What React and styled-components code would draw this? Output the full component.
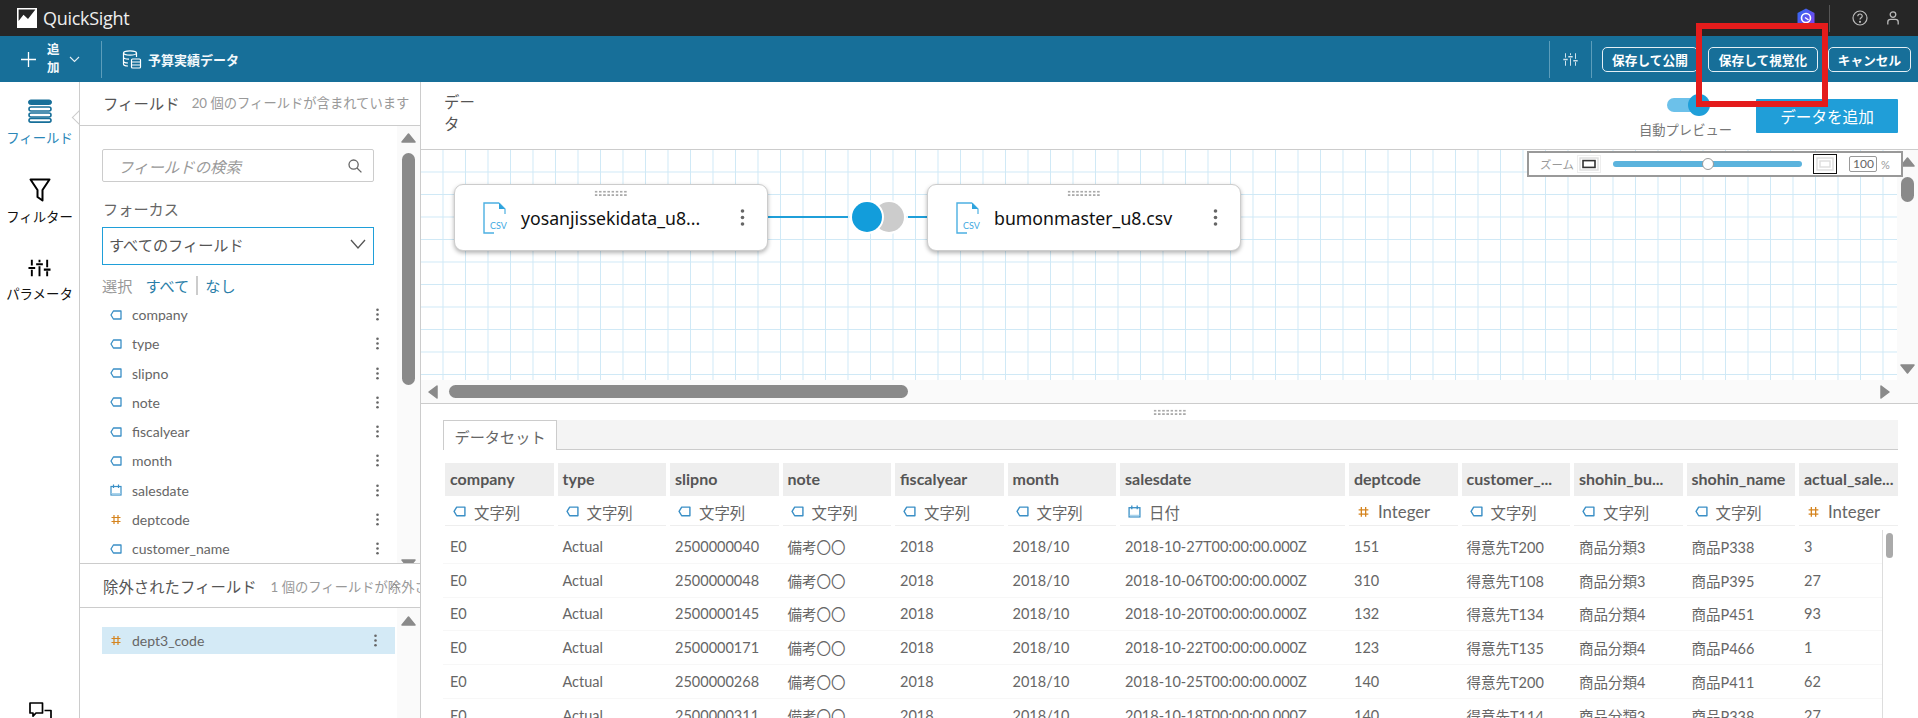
import React from "react";
import styled, { createGlobalStyle } from "styled-components";

const FONT = `Lato, "Noto Sans CJK JP", sans-serif`;

const Global = createGlobalStyle`
  html, body { margin: 0; padding: 0; background: #fff; }
  body { font-family: ${FONT}; }
  * { box-sizing: border-box; }
`;

const Root = styled.div`
  position: relative; width: 1918px; height: 718px; overflow: hidden;
  display: flex; flex-direction: column; background: #fff; color: #666;
`;
const RedFrame = styled.div`
  position: absolute; left: 1696px; top: 23px; width: 132px; height: 84px;
  border: 6px solid #e41c1c; pointer-events: none;
`;

/* top bar */
const TopBar = styled.header`
  height: 36px; flex: none; background: #262626; display: flex; align-items: center; padding-left: 17px;
`;
const LogoText = styled.span`
  margin-left: 6px; font: 400 18px "Open Sans", sans-serif; letter-spacing: -0.3px; color: #eee;
`;
const TopRight = styled.div`
  margin-left: auto; display: flex; align-items: center; height: 100%; padding-right: 19px;
`;
const TopDivider = styled.span`
  width: 1px; height: 27px; background: #555; margin: 0 22px 0 13px;
`;
const HelpWrap = styled.span`
  display: flex; margin-right: 19px; color: #bbb;
`;

/* tool bar */
const ToolBar = styled.div`
  height: 46px; flex: none; background: #176f99; display: flex; align-items: center; color: #fff;
`;
const AddGroup = styled.div`
  display: flex; align-items: center; padding-left: 21px; width: 101px;
`;
const AddLabel = styled.span`
  font-size: 12.5px; font-weight: 700; line-height: 18px; width: 13px; margin: 0 9px 0 11px; color: #f2f8fb;
`;
const BarDivider = styled.span`
  width: 1px; height: 37px; background: #5c9dbb; flex: none;
  margin-left: ${(p) => p.$ml || 0}px; margin-right: ${(p) => p.$mr || 0}px;
`;
const DataName = styled.span`
  font-size: 13px; font-weight: 700; margin-left: 6px; color: #f2f8fb;
`;
const ToolRight = styled.div`
  margin-left: auto; display: flex; align-items: center; padding-right: 7px;
`;
const OutlineButton = styled.button`
  width: ${(p) => p.$w}px; height: 25px; margin-right: ${(p) => p.$mr || 0}px; padding: 0;
  background: transparent; border: 1px solid #e4eff5; border-radius: 5px; color: #fff;
  font: 700 12.6px ${FONT}; letter-spacing: 0.1px; white-space: nowrap;
`;

/* main */
const Main = styled.div`
  flex: 1; min-height: 0; display: flex;
`;
const Rail = styled.nav`
  width: 80px; flex: none; border-right: 1px solid #ccc; display: flex; flex-direction: column;
  align-items: center; position: relative; overflow: hidden; padding-top: 17px;
`;
const RailNotch = styled.span`
  position: absolute; right: -6px; top: 30px; width: 11px; height: 11px; background: #fff;
  border-left: 1px solid #ccc; border-bottom: 1px solid #ccc; transform: rotate(45deg);
`;
const RailItem = styled.div`
  height: ${(p) => p.$h}px; display: flex; flex-direction: column; align-items: center; flex: none;
`;
const RailIcon = styled.span`
  height: 24px; display: flex; align-items: flex-start;
`;
const RailLabel = styled.span`
  margin-top: ${(p) => p.$mt}px; font-size: 13.4px; line-height: 18px; white-space: nowrap;
  color: ${(p) => (p.$active ? "#2b87b8" : "#111")};
`;
const RailBottom = styled.div`
  margin-top: auto; margin-bottom: -8px; display: flex;
`;

/* field panel */
const FieldPanel = styled.aside`
  width: 341px; flex: none; border-right: 1px solid #ccc; display: flex; flex-direction: column;
`;
const PanelHead = styled.div`
  height: ${(p) => p.$h}px; flex: none; display: flex; align-items: center; padding-left: 23px;
  padding-bottom: ${(p) => p.$pb || 0}px; padding-top: ${(p) => p.$pt || 0}px;
  border-bottom: 1px solid #ccc; white-space: nowrap; overflow: hidden; position: relative;
`;
const PanelTitle = styled.span`
  font-size: 15.4px; color: #555;
`;
const PanelSub = styled.span`
  font-size: 13.3px; color: #999; margin-left: ${(p) => p.$ml}px;
`;
const CollapseMark = styled.span`
  position: absolute; left: 309px; top: 19px; display: flex;
`;
const PanelBody = styled.div`
  display: flex; flex: ${(p) => (p.$grow ? 1 : "none")}; height: ${(p) => (p.$h ? p.$h + "px" : "auto")};
  min-height: 0; overflow: hidden;
  border-bottom: ${(p) => (p.$line ? "1px solid #ccc" : "none")};
`;
const PanelContent = styled.div`
  flex: 1; min-width: 0; padding-left: 22px;
`;
const SearchBox = styled.div`
  margin: 23px 23px 0 0; height: 33px; border: 1px solid #ccc; border-radius: 2px; display: flex;
  align-items: center; padding: 0 11px 0 15px;
`;
const Placeholder = styled.span`
  flex: 1; font-size: 15.4px; font-style: italic; color: #999;
`;
const FormLabel = styled.div`
  margin-top: 16px; font-size: 15.2px; line-height: 22px; color: #666; padding-left: 1px;
`;
const SelectBox = styled.div`
  margin: 7px 23px 0 0; height: 38px; border: 1px solid #1f9fd9; display: flex; align-items: center;
  padding: 0 7px 4px 6px; justify-content: space-between; font-size: 15.2px; color: #555;
`;
const SelectRow = styled.div`
  display: flex; align-items: center; height: 20px; margin-top: 10px; font-size: 15.2px; color: #999;
`;
const LinkText = styled.span`
  color: #2a7ea8;
  margin-left: ${(p) => p.$ml || 0}px;
`;
const Bar = styled.span`
  width: 2px; height: 19px; background: #ccc; margin: 0 7px;
`;
const FieldList = styled.div`
  margin-top: 5px;
`;
const FieldRow = styled.div`
  height: ${(p) => (p.$sel ? 27 : 29.25)}px; display: flex; align-items: center; padding: 0 18px 0 8px;
  font-size: 14px; color: #666; gap: 10px; margin-right: ${(p) => (p.$sel ? 2 : 0)}px;
  background: ${(p) => (p.$sel ? "#d4eaf6" : "transparent")};
`;
const FieldName = styled.span`
  flex: 1;
`;
const ExcludedList = styled.div`
  margin-top: 19px;
`;
const Track = styled.div`
  width: ${(p) => p.$w || 23}px; flex: none; background: #fafafa; display: flex; flex-direction: column;
  align-items: center; overflow: hidden; padding-top: ${(p) => p.$pt || 0}px;
`;
const VThumb = styled.div`
  width: 13px; border-radius: 7px; background: #8a8a8a; flex: none;
  height: ${(p) => p.$h}px; margin-top: ${(p) => p.$mt}px; margin-bottom: ${(p) => p.$mb || 0}px;
`;

/* workspace */
const Workspace = styled.section`
  flex: 1; min-width: 0; display: flex; flex-direction: column;
`;
const WorkHead = styled.div`
  height: 68px; flex: none; display: flex; border-bottom: 1px solid #ccc; padding: 10px 20px 0 23px;
`;
const WorkTitle = styled.div`
  width: 32px; font-size: 15.4px; line-height: 21.5px; color: #555;
`;
const PreviewBlock = styled.div`
  margin-left: auto; width: 93px; display: flex; flex-direction: column; align-items: center; margin-top: 6px;
`;
const Switch = styled.div`
  position: relative; width: 42px; height: 14px; border-radius: 7px; background: #6cc1ea; margin: 0 0 0 4px;
`;
const SwitchThumb = styled.span`
  position: absolute; right: -1px; top: -4px; width: 22px; height: 22px; border-radius: 50%; background: #1f9fd9;
`;
const PreviewLabel = styled.span`
  margin-top: 8px; font-size: 13.3px; color: #777; white-space: nowrap;
`;
const PrimaryButton = styled.button`
  margin: 7px 0 0 24px; width: 142px; height: 34px; border: 0; border-radius: 1px; background: #209ed8;
  color: #fff; font: 400 15.6px ${FONT}; padding: 0;
`;

const CanvasWrap = styled.div`
  height: 254px; flex: none; position: relative; border-bottom: 1px solid #ccc; display: flex; flex-direction: column;
`;
const CanvasRow = styled.div`
  height: 230px; flex: none; display: flex;
`;
const Grid = styled.div`
  flex: 1; min-width: 0; display: flex; align-items: flex-start; padding: 34px 0 0 33px;
  background-image:
    linear-gradient(to right, #cfe9f6 1px, transparent 1px),
    linear-gradient(to bottom, #cfe9f6 1px, transparent 1px);
  background-size: 22.5px 22.5px;
  background-position: 21.5px 21.5px;
`;
const Node = styled.div`
  width: 314px; height: 67px; flex: none; position: relative; background: #fff; border: 1px solid #ccc;
  border-radius: 9px; box-shadow: 0 2px 4px rgba(0, 0, 0, 0.3); display: flex; align-items: center;
  padding: 0 12px 0 28px;
`;
const Grip = styled.span`
  position: absolute; left: 139px; top: 5px; width: 34px; height: 7px;
  background-image: radial-gradient(circle, #aaa 1px, transparent 1.2px);
  background-size: 4.2px 3.4px;
`;
const NodeName = styled.span`
  flex: 1; margin-left: 14px; font: 400 17.7px "Noto Sans", sans-serif; color: #111; white-space: nowrap;
`;
const Connector = styled.div`
  width: 159px; height: 66px; flex: none; display: flex; align-items: center;
`;
const Line = styled.span`
  height: 2px; background: #1f9fd9; width: ${(p) => p.$w}px; flex: none;
`;
const ZoomBar = styled.div`
  position: absolute; left: 1106px; top: 1px; width: 376px; height: 26px; background: #fff; border: 2px solid #999;
  display: flex; align-items: center; padding-left: 11px;
`;
const ZoomLabel = styled.span`
  font-size: 11.4px; color: #999; width: 37px;
`;
const ZoomIconBtn = styled.span`
  display: flex; width: 24px; height: ${(p) => (p.$sel ? 20 : 18)}px; align-items: center; justify-content: center;
  border: 1px solid ${(p) => (p.$sel ? "#111" : "#eee")};
`;
const Slider = styled.div`
  position: relative; width: 189px; height: 6px; border-radius: 3px; background: #5bb3dd; margin: 0 11px 0 12px;
`;
const SliderThumb = styled.span`
  position: absolute; left: 89px; top: -3px; width: 12px; height: 12px; border-radius: 50%; background: #fff; border: 1px solid #999;
`;
const ZoomInput = styled.span`
  margin-left: 12px; width: 28px; height: 16px; border: 1px solid #999; border-radius: 2px; font-size: 12px;
  line-height: 14px; text-align: right; padding-right: 2px; color: #666;
`;
const Percent = styled.span`
  margin-left: 4px; font-size: 11px; color: #999;
`;
const HScroll = styled.div`
  flex: 1; background: #fafafa; display: flex; align-items: center; padding: 0 27px 0 6px;
`;
const HThumb = styled.div`
  width: 459px; height: 13px; border-radius: 7px; background: #8a8a8a; margin: 0 auto 0 10px;
`;
const Resizer = styled.div`
  height: 16px; flex: none; display: flex; align-items: center; justify-content: center;
`;
const ResizerGrip = styled.span`
  width: 34px; height: 7px;
  background-image: radial-gradient(circle, #aaa 1px, transparent 1.2px);
  background-size: 4.2px 3.4px;
`;
const DataSet = styled.div`
  flex: 1; min-height: 0; padding: 0 20px 0 22px;
`;
const TabStrip = styled.div`
  height: 30px; background: #f4f4f4; border-bottom: 1px solid #ccc; display: flex;
`;
const Tab = styled.div`
  width: 114px; height: 30px; background: #fff; border: 1px solid #ccc; border-bottom: 0; font-size: 15.2px;
  color: #666; display: flex; align-items: center; justify-content: center;
`;
const COLS = "repeat(6, 108.5px) 225px repeat(4, 108.5px)";
const TableRow = styled.div`
  display: grid; grid-template-columns: ${COLS} 99px; column-gap: 4px; padding-left: 2px;
  margin-top: ${(p) => p.$mt || 0}px;
`;
const HeadCell = styled.div`
  height: 33px; background: #eee; padding-left: 5px; font-size: 16px; font-weight: 700; line-height: 31px;
  color: #555; white-space: nowrap; overflow: hidden;
`;
const TypeCell = styled.div`
  height: 30px; border-bottom: 1px solid #eee; display: flex; align-items: center; padding: 2px 0 0 8px; gap: 8px;
  color: #666;
  svg { width: 13px; height: auto; }
`;
const TypeText = styled.span`
  font-size: ${(p) => (p.$latin ? 16.8 : 15.4)}px; white-space: nowrap;
`;
const RowsArea = styled.div`
  display: flex; margin-top: 4px;
`;
const Rows = styled.div`
  flex: 1; min-width: 0;
`;
const DataRow = styled.div`
  display: grid; grid-template-columns: ${COLS} 83px; column-gap: 4px; padding-left: 2px; height: 33.8px;
  border-bottom: 1px solid #f7f7f7; align-items: center;
`;
const DataCell = styled.div`
  padding-left: 5px; font-size: 14.5px; color: #666; white-space: nowrap;
`;
const TableScroll = styled.div`
  width: 16px; flex: none; border-left: 1px solid #ddd; padding: 3px 0 0 3px;
`;
const TableThumb = styled.div`
  width: 7px; height: 25px; border-radius: 4px; background: #aaa;
`;

/* drawings */
const Arrow = ({ dir = "up" }) => {
  const pts = { up: "1,9 7.5,1 14,9", down: "1,1 7.5,9 14,1", left: "10,1 2,7 10,13", right: "2,1 10,7 2,13" }[dir];
  const wide = dir === "up" || dir === "down";
  return (
    <svg width={wide ? 15 : 12} height={wide ? 10 : 14} style={{ flex: "none", display: "block" }}>
      <polygon points={pts} fill="#8a8a8a" stroke="#8a8a8a" strokeWidth="1.5" strokeLinejoin="round" />
    </svg>
  );
};
const Tag = () => (
  <svg width="12" height="10" viewBox="0 0 12 10" style={{ flex: "none" }}>
    <path d="M3.4 1H11v8H3.4L1 5z" fill="none" stroke="#3a8fc6" strokeWidth="1.3" strokeLinejoin="round" />
  </svg>
);
const Cal = () => (
  <svg width="12" height="12" viewBox="0 0 12 12" style={{ flex: "none" }}>
    <rect x="1" y="2.5" width="10" height="8.5" fill="none" stroke="#3a8fc6" strokeWidth="1.2" />
    <path d="M3.5 0.5v3.5M8.5 0.5v3.5" stroke="#3a8fc6" strokeWidth="1.2" />
    <rect x="1.6" y="9" width="8.8" height="1.5" fill="#a9d3ec" />
  </svg>
);
const Hash = () => (
  <svg width="12" height="11" viewBox="0 0 12 11" style={{ flex: "none" }}>
    <path d="M4 1v9M8 1v9M1.5 3.5h9M1.5 7.5h9" stroke="#d5841e" strokeWidth="1.2" />
  </svg>
);
const typeIcon = { t: <Tag />, d: <Cal />, n: <Hash /> };
const Dots = () => (
  <svg width="3" height="13" viewBox="0 0 3 13" style={{ flex: "none" }}>
    <circle cx="1.5" cy="1.7" r="1.3" fill="#666" />
    <circle cx="1.5" cy="6.5" r="1.3" fill="#666" />
    <circle cx="1.5" cy="11.3" r="1.3" fill="#666" />
  </svg>
);
const NodeDots = () => (
  <svg width="5" height="17" viewBox="0 0 5 17" style={{ flex: "none", marginRight: 10 }}>
    <circle cx="2.5" cy="2" r="1.8" fill="#666" />
    <circle cx="2.5" cy="8.5" r="1.8" fill="#666" />
    <circle cx="2.5" cy="15" r="1.8" fill="#666" />
  </svg>
);
const Csv = () => (
  <svg width="24" height="32" viewBox="0 0 24 32" style={{ flex: "none", overflow: "visible" }}>
    <path d="M16 1H1v30h10" fill="none" stroke="#4cb0e2" strokeWidth="1.4" />
    <path d="M16 1l6 6v5" fill="none" stroke="#4cb0e2" strokeWidth="1.2" />
    <path d="M16 1v6h6z" fill="#2ea3dd" />
    <text x="7" y="27" fontSize="9" fontFamily="Lato, sans-serif" fill="#3fa9df">CSV</text>
  </svg>
);
const Logo = () => (
  <svg width="20" height="20" viewBox="0 0 20 20" style={{ flex: "none" }}>
    <rect width="20" height="20" fill="#fff" />
    <path d="M1.6 1.6H18.4L11 11 6.5 6.8 1.6 13z" fill="#262626" />
  </svg>
);
const Shield = () => (
  <svg width="20" height="20" viewBox="0 0 20 20" style={{ flex: "none", display: "block" }}>
    <defs>
      <linearGradient id="sh" x1="0" y1="0" x2="1" y2="1">
        <stop offset="0" stopColor="#2a6cf0" />
        <stop offset="1" stopColor="#8a3ff0" />
      </linearGradient>
    </defs>
    <path d="M10 0.5l8.5 4.5v10L10 19.5 1.5 15V5z" fill="url(#sh)" />
    <circle cx="10" cy="10" r="4.5" fill="none" stroke="#fff" strokeWidth="1.6" />
    <path d="M9 9.5l3.5 2.5" stroke="#fff" strokeWidth="1.4" />
  </svg>
);
const Sliders = ({ color = "#000", w = 2, width = 23, height = 20 }) => (
  <svg width={width} height={height} viewBox="0 0 24 24" preserveAspectRatio="none" style={{ flex: "none", display: "block" }}>
    <g stroke={color} strokeWidth={w} fill="none">
      <path d="M4 2v7M4 14v8M12 2v3M12 10v12M20 2v9M20 16v6" />
      <path d="M0.5 12h7M8.5 7.5h7M16.5 14h7" strokeWidth={w + 0.6} />
    </g>
  </svg>
);

const fields = [
  ["company", "t"], ["type", "t"], ["slipno", "t"], ["note", "t"], ["fiscalyear", "t"],
  ["month", "t"], ["salesdate", "d"], ["deptcode", "n"], ["customer_name", "t"],
];
const columns = [
  ["company", "t", "文字列"], ["type", "t", "文字列"], ["slipno", "t", "文字列"], ["note", "t", "文字列"],
  ["fiscalyear", "t", "文字列"], ["month", "t", "文字列"], ["salesdate", "d", "日付"], ["deptcode", "n", "Integer"],
  ["customer_...", "t", "文字列"], ["shohin_bu...", "t", "文字列"], ["shohin_name", "t", "文字列"], ["actual_sale...", "n", "Integer"],
];
const rows = [
  ["2500000040", "27", "151", "T200", "3", "P338", "3"],
  ["2500000048", "06", "310", "T108", "3", "P395", "27"],
  ["2500000145", "20", "132", "T134", "4", "P451", "93"],
  ["2500000171", "22", "123", "T135", "4", "P466", "1"],
  ["2500000268", "25", "140", "T200", "4", "P411", "62"],
  ["2500000311", "18", "140", "T114", "3", "P338", "27"],
];

export default function App() {
  return (
    <Root>
      <Global />
      <TopBar>
        <Logo />
        <LogoText>QuickSight</LogoText>
        <TopRight>
          <Shield />
          <TopDivider />
          <HelpWrap>
            <svg width="16" height="16" viewBox="0 0 16 16" fill="none" stroke="#bbb" strokeWidth="1.2">
              <circle cx="8" cy="8" r="7" />
              <path d="M5.8 6.2c0-3 4.6-2.8 4.4 0 0 1.6-2.2 1.6-2.2 3.4" />
              <circle cx="8" cy="11.8" r="0.5" fill="#bbb" />
            </svg>
          </HelpWrap>
          <svg width="12" height="14" viewBox="0 0 12 14" fill="none" stroke="#bbb" strokeWidth="1.3">
            <circle cx="6" cy="3.6" r="2.8" />
            <path d="M0.8 13.4V11c0-1.6 1.4-2.6 2.8-2.6h4.8c1.4 0 2.8 1 2.8 2.6v2.4" />
          </svg>
        </TopRight>
      </TopBar>

      <ToolBar>
        <AddGroup>
          <svg width="15" height="15" viewBox="0 0 15 15" stroke="#fff" strokeWidth="1.3" style={{ flex: "none" }}>
            <path d="M7.5 0v15M0 7.5h15" />
          </svg>
          <AddLabel>追加</AddLabel>
          <svg width="11" height="7" viewBox="0 0 11 7" fill="none" stroke="#e4eff5" strokeWidth="1.1">
            <path d="M1 1l4.5 4.5L10 1" />
          </svg>
        </AddGroup>
        <BarDivider $mr={20} />
        <svg width="20" height="19" viewBox="0 0 20 19" fill="none" stroke="#fff" strokeWidth="1.2" style={{ flex: "none" }}>
          <ellipse cx="8" cy="3" rx="6.5" ry="2.2" />
          <path d="M1.5 3v11c0 1.2 2.2 2 4.5 2M14.5 3v4M1.5 7c0 1.2 2.6 2.2 5.5 2.2M1.5 11c0 1.2 2 2 4.5 2" />
          <rect x="9.5" y="9" width="9" height="9" rx="1" />
          <path d="M9.5 12h9M9.5 15h9" />
        </svg>
        <DataName>予算実績データ</DataName>
        <ToolRight>
          <BarDivider $mr={13} />
          <Sliders color="#cfe2ec" w={1.6} width={15} height={15} />
          <BarDivider $ml={13} $mr={10} />
          <OutlineButton $w={96} $mr={10}>保存して公開</OutlineButton>
          <OutlineButton $w={110} $mr={10}>保存して視覚化</OutlineButton>
          <OutlineButton $w={83}>キャンセル</OutlineButton>
        </ToolRight>
      </ToolBar>

      <Main>
        <Rail>
          <RailNotch />
          <RailItem $h={79}>
            <RailIcon>
              <svg width="24" height="24" viewBox="0 0 24 24" fill="none" stroke="#176f99">
                <rect x="0.5" y="1" width="23" height="4.5" rx="2.2" fill="#176f99" />
                <rect x="1" y="8" width="22" height="4" rx="2" strokeWidth="1.6" />
                <rect x="1" y="14" width="22" height="4" rx="2" strokeWidth="1.6" />
                <rect x="1" y="19.5" width="22" height="3.6" rx="1.8" strokeWidth="1.6" />
              </svg>
            </RailIcon>
            <RailLabel $active $mt={6}>フィールド</RailLabel>
          </RailItem>
          <RailItem $h={80}>
            <RailIcon>
              <svg width="22" height="24" viewBox="0 0 22 24" fill="none" stroke="#000" strokeWidth="2">
                <path d="M1.5 1.5h19L13.5 12v10.5l-5-3.5V12z" strokeLinejoin="round" />
              </svg>
            </RailIcon>
            <RailLabel $mt={6}>フィルター</RailLabel>
          </RailItem>
          <RailItem $h={60}>
            <RailIcon>
              <Sliders />
            </RailIcon>
            <RailLabel $mt={3}>パラメータ</RailLabel>
          </RailItem>
          <RailBottom>
            <svg width="24" height="24" viewBox="0 0 24 24" fill="none" stroke="#000" strokeWidth="1.7">
              <path d="M2 1h12.5v10H8l-3 3.2V11H2z" strokeLinejoin="round" />
              <path d="M16.5 8.5H23V19h-2.5v3l-3-3H10" strokeLinejoin="round" />
            </svg>
          </RailBottom>
        </Rail>

        <FieldPanel>
          <PanelHead $h={44} $pb={2}>
            <PanelTitle>フィールド</PanelTitle>
            <PanelSub $ml={12}>20 個のフィールドが含まれています</PanelSub>
          </PanelHead>
          <PanelBody $h={438} $line>
            <PanelContent>
              <SearchBox>
                <Placeholder>フィールドの検索</Placeholder>
                <svg width="14" height="14" viewBox="0 0 14 14" fill="none" stroke="#666" strokeWidth="1.3">
                  <circle cx="5.6" cy="5.6" r="4.6" />
                  <path d="M9 9l4.4 4.4" />
                </svg>
              </SearchBox>
              <FormLabel>フォーカス</FormLabel>
              <SelectBox>
                <span>すべてのフィールド</span>
                <svg width="16" height="10" viewBox="0 0 16 10" fill="none" stroke="#555" strokeWidth="1.3">
                  <path d="M1 1l7 8 7-8" />
                </svg>
              </SelectBox>
              <SelectRow>
                選択
                <LinkText $ml={13}>すべて</LinkText>
                <Bar />
                <LinkText>なし</LinkText>
              </SelectRow>
              <FieldList>
                {fields.map(([n, t]) => (
                  <FieldRow key={n}>
                    {typeIcon[t]}
                    <FieldName>{n}</FieldName>
                    <Dots />
                  </FieldRow>
                ))}
              </FieldList>
            </PanelContent>
            <Track $pt={7}>
              <Arrow dir="up" />
              <VThumb $h={232} $mt={10} $mb={174} />
              <Arrow dir="down" />
            </Track>
          </PanelBody>
          <PanelHead $h={44} $pt={1}>
            <PanelTitle>除外されたフィールド</PanelTitle>
            <PanelSub $ml={14}>1 個のフィールドが除外されています</PanelSub>
            <CollapseMark>
              <svg width="11" height="7" viewBox="0 0 11 7" fill="none" stroke="#888" strokeWidth="1.1">
                <path d="M1 6l4.5-5L10 6" />
              </svg>
            </CollapseMark>
          </PanelHead>
          <PanelBody $grow>
            <PanelContent>
              <ExcludedList>
                <FieldRow $sel>
                  <Hash />
                  <FieldName>dept3_code</FieldName>
                  <Dots />
                </FieldRow>
              </ExcludedList>
            </PanelContent>
            <Track $pt={8}>
              <Arrow dir="up" />
            </Track>
          </PanelBody>
        </FieldPanel>

        <Workspace>
          <WorkHead>
            <WorkTitle>データ</WorkTitle>
            <PreviewBlock>
              <Switch>
                <SwitchThumb />
              </Switch>
              <PreviewLabel>自動プレビュー</PreviewLabel>
            </PreviewBlock>
            <PrimaryButton>データを追加</PrimaryButton>
          </WorkHead>

          <CanvasWrap>
            <CanvasRow>
              <Grid>
                <Node>
                  <Grip />
                  <Csv />
                  <NodeName>yosanjissekidata_u8...</NodeName>
                  <NodeDots />
                </Node>
                <Connector>
                  <Line $w={80} />
                  <svg width="60" height="36" viewBox="0 0 60 36" style={{ flex: "none" }}>
                    <circle cx="41" cy="18" r="17" fill="#fff" />
                    <circle cx="41" cy="18" r="15" fill="#ccc" />
                    <circle cx="19" cy="18" r="17" fill="#fff" />
                    <circle cx="19" cy="18" r="15" fill="#129ddb" />
                  </svg>
                  <Line $w={19} />
                </Connector>
                <Node>
                  <Grip />
                  <Csv />
                  <NodeName>bumonmaster_u8.csv</NodeName>
                  <NodeDots />
                </Node>
              </Grid>
              <Track $w={21} $pt={7}>
                <Arrow dir="up" />
                <VThumb $h={25} $mt={10} $mb={162} />
                <Arrow dir="down" />
              </Track>
            </CanvasRow>
            <HScroll>
              <Arrow dir="left" />
              <HThumb />
              <Arrow dir="right" />
            </HScroll>
            <ZoomBar>
              <ZoomLabel>ズーム</ZoomLabel>
              <ZoomIconBtn>
                <svg width="20" height="14" viewBox="0 0 20 14" fill="none">
                  <rect x="1" y="1" width="18" height="12" stroke="#ddd" strokeWidth="1.4" />
                  <rect x="4" y="3.6" width="12" height="6.8" stroke="#333" strokeWidth="1.6" />
                </svg>
              </ZoomIconBtn>
              <Slider>
                <SliderThumb />
              </Slider>
              <ZoomIconBtn $sel>
                <svg width="18" height="14" viewBox="0 0 18 14" fill="none" stroke="#ddd" strokeWidth="1.4">
                  <rect x="1" y="1" width="16" height="12" />
                  <rect x="4" y="4" width="10" height="6" />
                </svg>
              </ZoomIconBtn>
              <ZoomInput>100</ZoomInput>
              <Percent>%</Percent>
            </ZoomBar>
          </CanvasWrap>

          <Resizer>
            <ResizerGrip />
          </Resizer>

          <DataSet>
            <TabStrip>
              <Tab>データセット</Tab>
            </TabStrip>
            <TableRow $mt={13}>
              {columns.map(([n]) => (
                <HeadCell key={n}>{n}</HeadCell>
              ))}
            </TableRow>
            <TableRow>
              {columns.map(([n, t, label]) => (
                <TypeCell key={n}>
                  {typeIcon[t]}
                  <TypeText $latin={t === "n"}>{label}</TypeText>
                </TypeCell>
              ))}
            </TableRow>
            <RowsArea>
              <Rows>
                {rows.map((r) => (
                  <DataRow key={r[0]}>
                    <DataCell>E0</DataCell>
                    <DataCell>Actual</DataCell>
                    <DataCell>{r[0]}</DataCell>
                    <DataCell>備考〇〇</DataCell>
                    <DataCell>2018</DataCell>
                    <DataCell>2018/10</DataCell>
                    <DataCell>{`2018-10-${r[1]}T00:00:00.000Z`}</DataCell>
                    <DataCell>{r[2]}</DataCell>
                    <DataCell>{`得意先${r[3]}`}</DataCell>
                    <DataCell>{`商品分類${r[4]}`}</DataCell>
                    <DataCell>{`商品${r[5]}`}</DataCell>
                    <DataCell>{r[6]}</DataCell>
                  </DataRow>
                ))}
              </Rows>
              <TableScroll>
                <TableThumb />
              </TableScroll>
            </RowsArea>
          </DataSet>
        </Workspace>
      </Main>
      <RedFrame />
    </Root>
  );
}
